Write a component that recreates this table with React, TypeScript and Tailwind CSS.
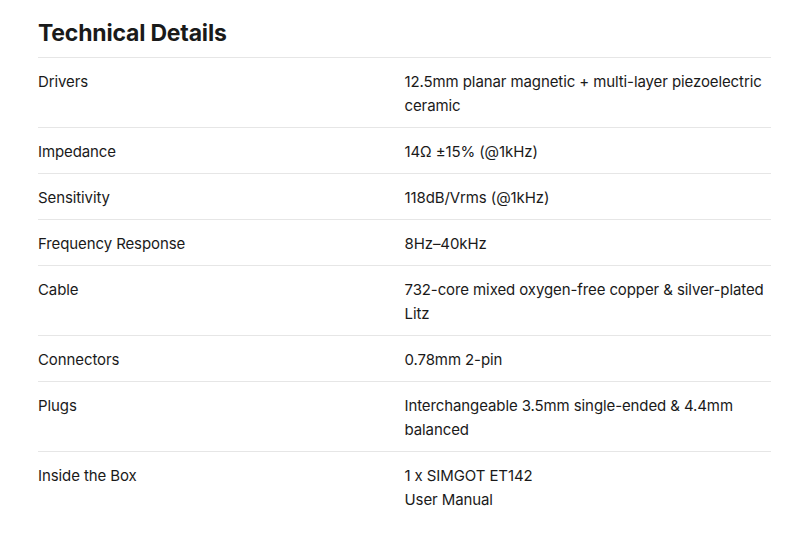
const SPECS: { label: string; value: string[] }[] = [
  { label: "Drivers", value: ["12.5mm planar magnetic + multi-layer piezoelectric ceramic"] },
  { label: "Impedance", value: ["14Ω ±15% (@1kHz)"] },
  { label: "Sensitivity", value: ["118dB/Vrms (@1kHz)"] },
  { label: "Frequency Response", value: ["8Hz–40kHz"] },
  { label: "Cable", value: ["732-core mixed oxygen-free copper & silver-plated Litz"] },
  { label: "Connectors", value: ["0.78mm 2-pin"] },
  { label: "Plugs", value: ["Interchangeable 3.5mm single-ended & 4.4mm balanced"] },
  { label: "Inside the Box", value: ["1 x SIMGOT ET142", "User Manual"] },
];

export default function App() {
  return (
    <div className="min-h-[548px] bg-white text-[#1a1a1a] font-['Inter',sans-serif]">
      <div className="ml-[38px] w-[733px] pt-[20px]">
        <h2 className="text-[23px] font-bold leading-[26px] tracking-[-0.2px] pb-[11px]">
          Technical Details
        </h2>
        <div>
          {SPECS.map((row) => (
            <div
              key={row.label}
              className="grid grid-cols-2 pt-[12px] pb-[9px] text-[15px] leading-6 tracking-[-0.1px] border-t border-[#e6e6e6]"
            >
              <div>{row.label}</div>
              <div>
                {row.value.map((v) => (
                  <div key={v}>{v}</div>
                ))}
              </div>
            </div>
          ))}
        </div>
      </div>
    </div>
  );
}
